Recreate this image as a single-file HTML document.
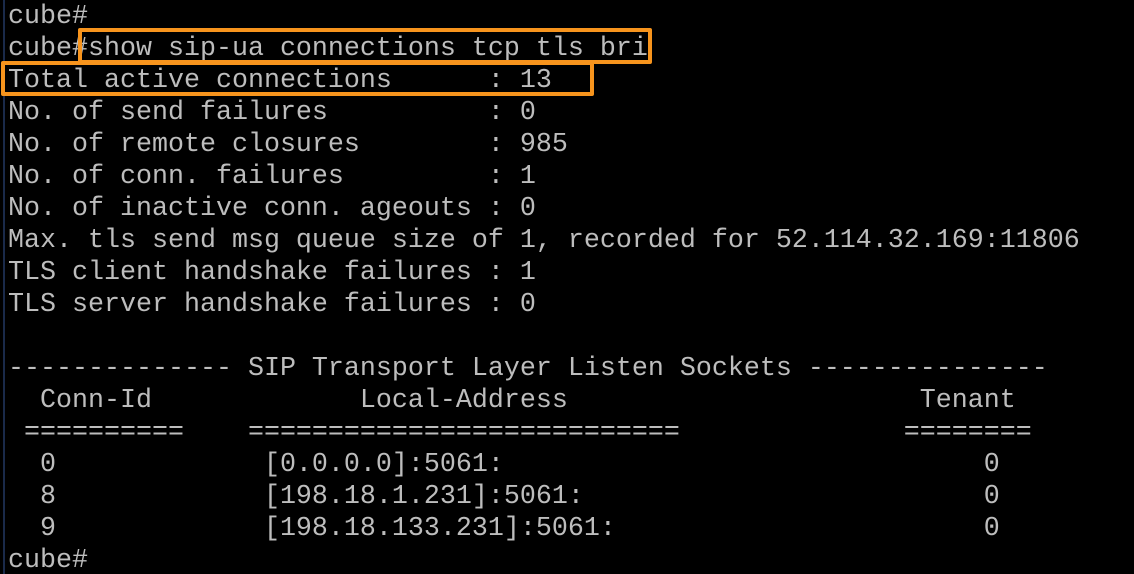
<!DOCTYPE html>
<html><head><style>
html,body{margin:0;padding:0;background:#000;width:1134px;height:574px;overflow:hidden;position:relative}
pre{position:absolute;left:8px;top:1px;margin:0;font-family:"Liberation Mono",monospace;font-size:26.67px;line-height:32px;color:#bdbdbd;}
.edge{position:absolute;left:3px;top:0;width:2px;height:574px;background:#1a2a4a}
.box{position:absolute;border:4px solid #f7941d;border-radius:2px}
</style></head><body>
<div class="edge"></div>
<pre>cube#
cube#show sip-ua connections tcp tls bri
Total active connections      : 13
No. of send failures          : 0
No. of remote closures        : 985
No. of conn. failures         : 1
No. of inactive conn. ageouts : 0
Max. tls send msg queue size of 1, recorded for 52.114.32.169:11806
TLS client handshake failures : 1
TLS server handshake failures : 0

-------------- SIP Transport Layer Listen Sockets ---------------
  Conn-Id             Local-Address                      Tenant
 ==========    ===========================              ========
  0             [0.0.0.0]:5061:                              0
  8             [198.18.1.231]:5061:                         0
  9             [198.18.133.231]:5061:                       0
cube#</pre>
<div class="box" style="left:78px;top:28px;width:566px;height:28px"></div>
<div class="box" style="left:1px;top:61px;width:585px;height:27px"></div>
</body></html>
